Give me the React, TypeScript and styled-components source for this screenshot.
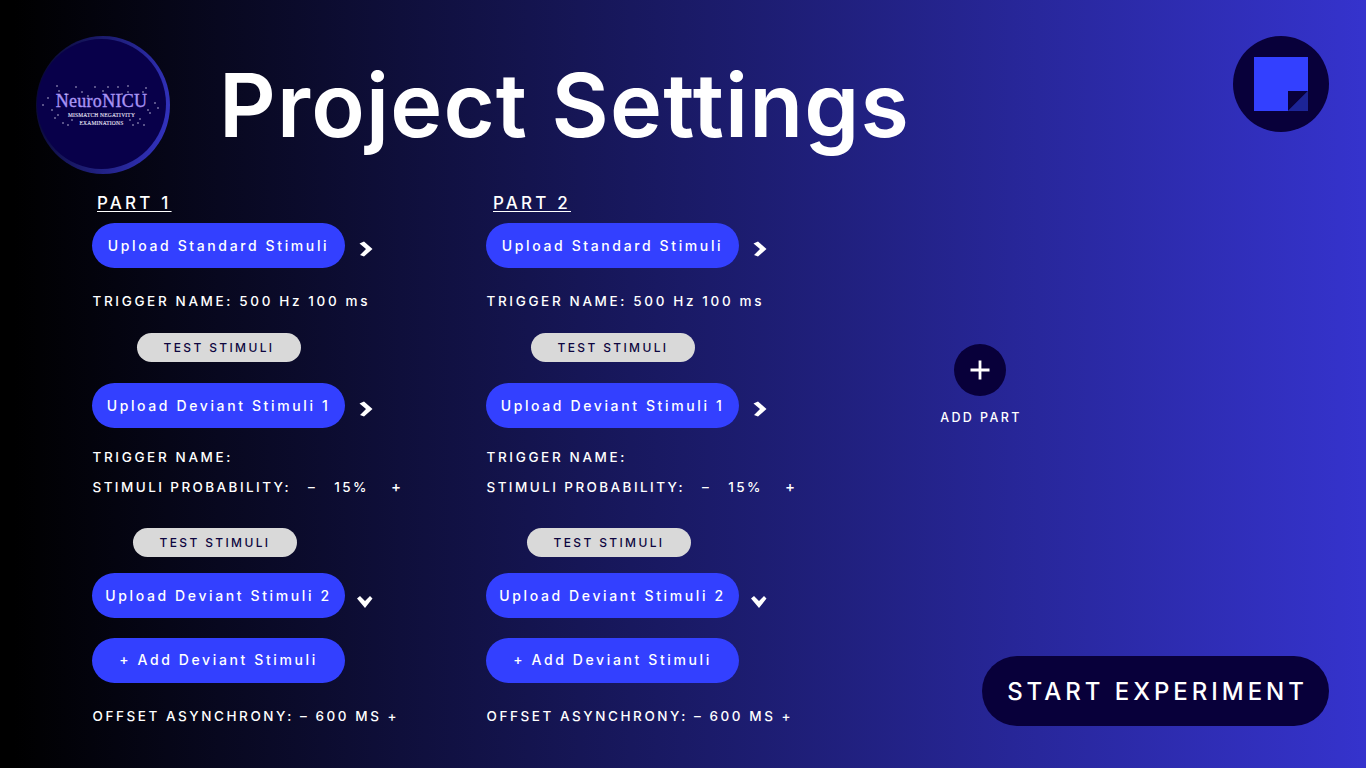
import React from "react";
import styled, { createGlobalStyle } from "styled-components";

const GlobalStyle = createGlobalStyle`
  html, body {
    margin: 0;
    padding: 0;
  }
  body {
    font-family: "Inter", "Open Sans", Arial, sans-serif;
  }
`;

const Page = styled.div`
  width: 1366px;
  height: 768px;
  box-sizing: border-box;
  overflow: hidden;
  padding: 36px 37px 0 36px;
  color: #ffffff;
  background: linear-gradient(90deg, #000000 1%, #1a1a66 50%, #3533cd 100%);
`;

const Header = styled.header`
  display: flex;
  align-items: flex-start;
  height: 158px;
`;

const LogoRing = styled.div`
  position: relative;
  width: 134px;
  height: 138px;
  flex: none;
  box-sizing: border-box;
  padding: 3px 4px 5px 1px;
  border-radius: 50%;
  background: linear-gradient(100deg, #06052a 0%, #1a1a6a 40%, #3535c8 100%);
`;

const LogoDisc = styled.div`
  height: 100%;
  border-radius: 50%;
  background: #08004a;
  display: flex;
  flex-direction: column;
  align-items: center;
  justify-content: center;
  padding-top: 11px;
  box-sizing: border-box;
`;

const LogoName = styled.div`
  font-family: "Liberation Serif", serif;
  font-size: 18px;
  line-height: 18px;
  color: #a994f5;
  letter-spacing: 0.3px;
  -webkit-text-stroke: 0.35px #a994f5;
`;

const LogoCaption = styled.div`
  font-family: "Liberation Serif", serif;
  font-size: 5.5px;
  line-height: 7.5px;
  margin-top: 2px;
  letter-spacing: 0.2px;
  color: #ece8fa;
  text-align: center;
  -webkit-text-stroke: 0.1px #ece8fa;
`;

const Stars = styled.svg`
  position: absolute;
  left: 0;
  top: 0;
`;

const Title = styled.h1`
  margin: 16px 0 0 49px;
  font-size: 88px;
  line-height: 106px;
  font-weight: 600;
  letter-spacing: 1.2px;
  white-space: nowrap;
`;

const DocBadge = styled.div`
  width: 96px;
  height: 96px;
  margin-left: auto;
  flex: none;
  border-radius: 50%;
  background: #08003a;
  display: flex;
  align-items: center;
  justify-content: center;
`;

const Body = styled.main`
  display: flex;
  padding-left: 56px;
`;

const Column = styled.section`
  width: 394px;
  flex: none;
  display: flex;
  flex-direction: column;
  align-items: flex-start;
`;

const PartLabel = styled.div<{ $ml: number }>`
  margin-left: ${(p) => p.$ml}px;
  height: 21px;
  font-size: 17px;
  line-height: 19px;
  font-weight: 500;
  letter-spacing: 3.2px;
  text-decoration: underline;
  text-decoration-thickness: 1px;
  text-underline-offset: 2px;
  margin-bottom: 8px;
`;

const UploadRow = styled.div<{ $mt?: number }>`
  display: flex;
  align-items: flex-start;
  margin-top: ${(p) => p.$mt ?? 0}px;
`;

const PillButton = styled.button<{ $mt?: number; $pb?: number }>`
  width: 253px;
  height: 45px;
  margin-top: ${(p) => p.$mt ?? 0}px;
  padding: 0 0 ${(p) => p.$pb ?? 0}px;
  border: none;
  border-radius: 23px;
  background: #3340ff;
  color: #ffffff;
  font-family: inherit;
  font-size: 14px;
  font-weight: 550;
  letter-spacing: 2.62px;
  white-space: nowrap;
`;

const Chevron = styled.svg<{ $down?: boolean }>`
  margin-left: ${(p) => (p.$down ? "12px" : "14px")};
  margin-top: ${(p) => (p.$down ? "22px" : "18px")};
`;

const InfoLine = styled.div<{ $mt: number; $ls?: number }>`
  margin-top: ${(p) => p.$mt}px;
  margin-left: 0.5px;
  height: 20px;
  display: flex;
  font-size: 13.5px;
  line-height: 20px;
  font-weight: 550;
  letter-spacing: ${(p) => p.$ls ?? 2.64}px;
  white-space: pre;
`;

const ProbValue = styled.span<{ $ml: number; $size?: number }>`
  margin-left: ${(p) => p.$ml}px;
  font-size: ${(p) => p.$size ?? 13.5}px;
`;

const TestButton = styled.button<{ $ml: number; $mt: number }>`
  width: 164px;
  height: 29px;
  margin-left: ${(p) => p.$ml}px;
  margin-top: ${(p) => p.$mt}px;
  padding: 0;
  border: none;
  border-radius: 15px;
  background: #d9d9d9;
  color: #0d0640;
  font-family: inherit;
  font-size: 12px;
  font-weight: 550;
  letter-spacing: 2.35px;
`;

const SidePanel = styled.aside`
  flex: 1;
  display: flex;
  flex-direction: column;
  align-items: flex-start;
`;

const AddPart = styled.div`
  margin: 150px 0 0 56px;
  width: 88px;
  display: flex;
  flex-direction: column;
  align-items: center;
`;

const AddPartButton = styled.div`
  width: 52px;
  height: 52px;
  border-radius: 50%;
  background: #08003a;
  display: flex;
  align-items: center;
  justify-content: center;
`;

const AddPartLabel = styled.div`
  margin-top: 14px;
  padding-left: 2px;
  font-size: 12.5px;
  line-height: 16px;
  font-weight: 500;
  letter-spacing: 2.4px;
  white-space: nowrap;
`;

const StartButton = styled.button`
  width: 347px;
  height: 70px;
  margin: 230px 0 0 102px;
  padding: 0 0 0 4px;
  border: none;
  border-radius: 35px;
  background: #08003a;
  color: #ffffff;
  font-family: inherit;
  font-size: 24px;
  font-weight: 500;
  letter-spacing: 3.97px;
  white-space: nowrap;
`;

const STARS: [number, number][] = [
  [21, 50], [23, 55], [40, 51], [46, 56], [59, 51], [67, 55], [72, 51], [82, 51],
  [92, 50], [92, 56], [110, 52], [107, 56], [12, 62], [7, 69], [16, 74], [22, 79],
  [19, 82], [27, 87], [32, 89], [112, 74], [122, 72], [119, 67], [104, 83], [97, 89],
  [108, 89], [102, 87], [114, 77], [86, 58], [52, 60], [30, 58], [36, 84], [94, 84],
];

const ChevronRight = () => (
  <Chevron width="14" height="16" viewBox="0 0 14 16">
    <path d="M0.5 2.5 L5 0.5 L13.5 8 L5 15.5 L1 14 L7 8 Z" fill="#ffffff" />
  </Chevron>
);

const ChevronDown = () => (
  <Chevron $down width="16" height="14" viewBox="0 0 16 14">
    <path d="M0 3.5 L3 1 L8 6 L13 1 L15.5 3.5 L8 13 Z" fill="#ffffff" />
  </Chevron>
);

const Part: React.FC<{ name: string; labelOffset: number }> = ({ name, labelOffset }) => (
  <Column>
    <PartLabel $ml={labelOffset}>{name}</PartLabel>
    <UploadRow>
      <PillButton>Upload Standard Stimuli</PillButton>
      <ChevronRight />
    </UploadRow>
    <InfoLine $mt={23}>TRIGGER NAME: 500 Hz 100 ms</InfoLine>
    <TestButton $ml={45} $mt={22}>TEST STIMULI</TestButton>
    <UploadRow $mt={21}>
      <PillButton>Upload Deviant Stimuli 1</PillButton>
      <ChevronRight />
    </UploadRow>
    <InfoLine $mt={19}>TRIGGER NAME:</InfoLine>
    <InfoLine $mt={10} $ls={2.42}>
      STIMULI PROBABILITY:
      <ProbValue $ml={17}>–</ProbValue>
      <ProbValue $ml={17}>15%</ProbValue>
      <ProbValue $ml={22} $size={15}>+</ProbValue>
    </InfoLine>
    <TestButton $ml={41} $mt={31}>TEST STIMULI</TestButton>
    <UploadRow $mt={16}>
      <PillButton>Upload Deviant Stimuli 2</PillButton>
      <ChevronDown />
    </UploadRow>
    <PillButton $mt={20} $pb={2}>+ Add Deviant Stimuli</PillButton>
    <InfoLine $mt={23} $ls={2.56}>OFFSET ASYNCHRONY: – 600 MS +</InfoLine>
  </Column>
);

export default function App() {
  return (
    <Page>
      <GlobalStyle />
      <Header>
        <LogoRing>
          <LogoDisc>
            <LogoName>NeuroNICU</LogoName>
            <LogoCaption>
              MISMATCH NEGATIVITY
              <br />
              EXAMINATIONS
            </LogoCaption>
          </LogoDisc>
          <Stars width="134" height="138" viewBox="0 0 134 138">
            {STARS.map(([x, y]) => (
              <circle key={`${x}-${y}`} cx={x} cy={y} r="0.7" fill="#e6e2fa" />
            ))}
          </Stars>
        </LogoRing>
        <Title>Project Settings</Title>
        <DocBadge>
          <svg width="54" height="54" viewBox="0 0 54 54">
            <path d="M0 0 H54 V34 L34 54 H0 Z" fill="#3340ff" />
            <path d="M34 34 H54 L34 54 Z" fill="#08003a" />
            <path d="M54 34 V54 H34 Z" fill="#1c2496" />
          </svg>
        </DocBadge>
      </Header>
      <Body>
        <Part name="PART 1" labelOffset={5} />
        <Part name="PART 2" labelOffset={7} />
        <SidePanel>
          <AddPart>
            <AddPartButton>
              <svg width="20" height="20" viewBox="0 0 20 20">
                <path d="M10 0.5 V19.5 M0.5 10 H19.5" stroke="#ffffff" strokeWidth="2.8" />
              </svg>
            </AddPartButton>
            <AddPartLabel>ADD PART</AddPartLabel>
          </AddPart>
          <StartButton>START EXPERIMENT</StartButton>
        </SidePanel>
      </Body>
    </Page>
  );
}
